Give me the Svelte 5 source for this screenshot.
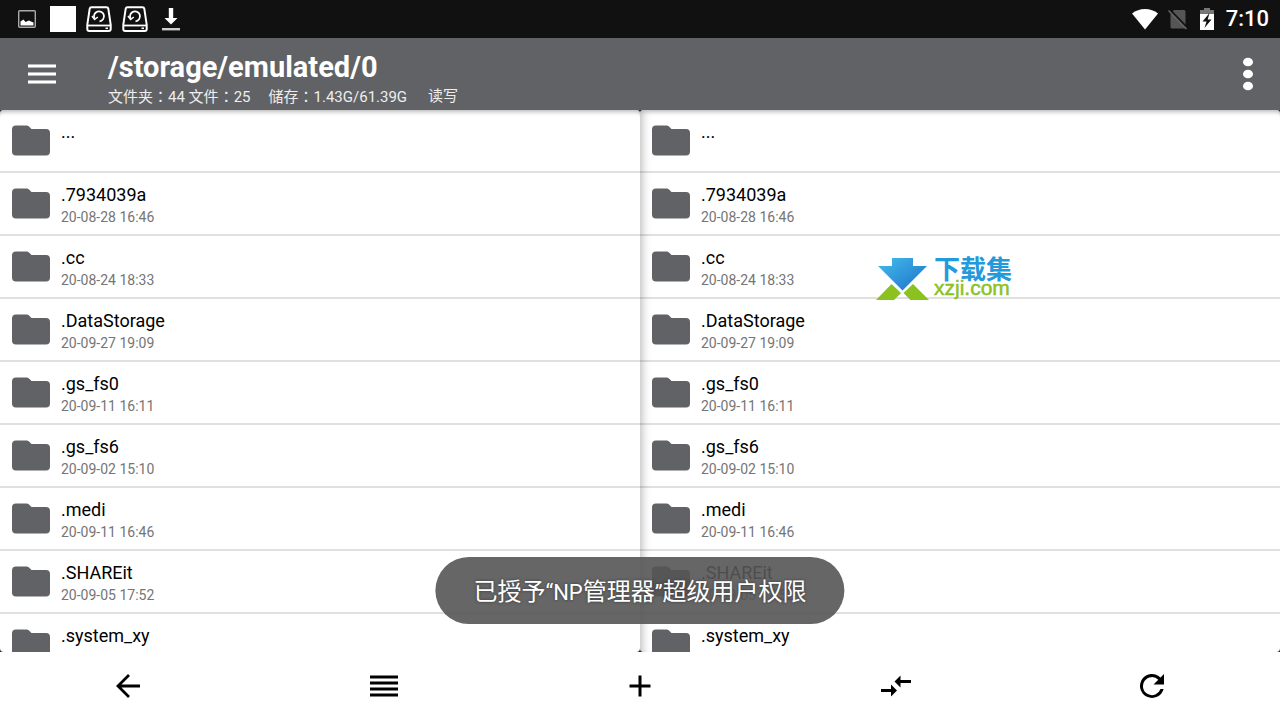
<script>
    let path = '/storage/emulated/0';
    let toast = { before: '已授予', app: '“NP', middle: '管理器', close: '”', after: '超级用户权限' };

    const files = [
        { name: '...', date: '' },
        { name: '.7934039a', date: '20-08-28 16:46' },
        { name: '.cc', date: '20-08-24 18:33' },
        { name: '.DataStorage', date: '20-09-27 19:09' },
        { name: '.gs_fs0', date: '20-09-11 16:11' },
        { name: '.gs_fs6', date: '20-09-02 15:10' },
        { name: '.medi', date: '20-09-11 16:46' },
        { name: '.SHAREit', date: '20-09-05 17:52' },
        { name: '.system_xy', date: '20-09-05 17:52' }
    ];

    const panes = [
        { id: 'left', files: files },
        { id: 'right', files: files }
    ];
</script>

<div class="app">
    <div class="status-bar">
        <div class="notifications">
            <svg class="picture" width="18" height="18" viewBox="0 0 18 18">
                <rect x="0.7" y="0.7" width="16.6" height="16.6" rx="1" fill="none" stroke="#aaa" stroke-width="1.4" />
                <path d="M2.5 15.5v-4l3-2 2 2.500 3.500-1.500 2 1 2.500 1v3z" fill="#fff" />
            </svg>
            <span class="square"></span>
            {#each [1, 2] as disk}
                <svg class="disk" width="26" height="26" viewBox="0 0 26 26" fill="none" stroke="#fff">
                    <path d="M5.5 1.3h15q1.5 0 1.8 1.4l2.4 16v4.2q0 2-2 2H3.3q-2 0-2-2v-4.2l2.4-16Q4 1.3 5.5 1.3z" stroke-width="2" />
                    <path d="M1.5 19.500h23" stroke-width="1.8" />
                    <path d="M8.500 12.500A5 5 0 1 1 13.500 15.300" stroke-width="1.8" />
                    <path d="M6 10l2.600 3.500 3.200-2.500" stroke-width="1.5" />
                    <path d="M19.500 22.300h2.500" stroke-width="1.6" />
                </svg>
            {/each}
            <svg class="download" width="18" height="24" viewBox="0 0 18 24">
                <path d="M6.8 1h4.4v10h4.3L9 17.500 2.500 11h4.300z" fill="#fff" />
                <path d="M0 21h18v2.400H0z" fill="#ccc" />
            </svg>
        </div>
        <div class="system">
            <svg width="26" height="22" viewBox="0 0 26 22">
                <path d="M13 21.500L0 5.500Q5.500 1 13 1t13 4.500z" fill="#fff" />
            </svg>
            <svg width="20" height="22" viewBox="0 0 20 22">
                <path d="M6 2h10q1.500 0 1.500 1.500v17H4q-1.500 0-1.500-1.500V6z" fill="#555" />
                <path d="M1.500 1.500l18 18.500" stroke="#111" stroke-width="2" />
                <path d="M.5 2.500l18 18.500" stroke="#666" stroke-width="1.500" />
            </svg>
            <svg width="14" height="22" viewBox="0 0 14 22">
                <path d="M0 7V2h4V0h6v2h4v5z" fill="#777" />
                <path d="M0 6h14v16H0z" fill="#fff" />
                <path d="M9.500 5L2.500 13.500h4L4.500 20l7-8.500H7.700z" fill="#111" />
            </svg>
            <span class="clock">7:10</span>
        </div>
    </div>

    <header>
        <button class="menu" aria-label="菜单">
            <svg width="28" height="22" viewBox="0 0 28 22">
                <path d="M0 3h28M0 11h28M0 19h28" stroke="#b5b6b8" stroke-width="4" />
                <path d="M0 3h28M0 11h28M0 19h28" stroke="#fff" stroke-width="2" />
            </svg>
        </button>
        <div class="heading">
            <h1>{path}</h1>
            <div class="info">
                <span>文件夹<i>：</i>44 文件<i>：</i>25</span>
                <span>储存<i>：</i>1.43G/61.39G</span>
                <span class="mode">读写</span>
            </div>
        </div>
        <button class="more" aria-label="更多">
            <svg width="10" height="34" viewBox="0 0 10 34" fill="#fff">
                <ellipse cx="5" cy="5" rx="5" ry="4.300" />
                <ellipse cx="5" cy="17" rx="5" ry="4.300" />
                <ellipse cx="5" cy="29" rx="5" ry="4.300" />
            </svg>
        </button>
    </header>

    <main>
        {#each panes as pane}
            <section class="pane {pane.id}">
                <ul>
                    {#each pane.files as file}
                        <li>
                            <svg class="folder" width="38" height="31" viewBox="0 0 38 31">
                                <path d="M4 .5h10.500q1.500 0 2.500 1l2.500 2.500h14.500q4 0 4 4v18.500q0 4-4 4H4q-4 0-4-4V4.500q0-4 4-4z" fill="#616266" />
                            </svg>
                            <div class="file">
                                <div class="name">{file.name}</div>
                                <div class="date">{file.date}</div>
                            </div>
                        </li>
                    {/each}
                </ul>
            </section>
        {/each}

        <div class="watermark">
            <svg width="53" height="42" viewBox="0 0 53 42">
                <defs>
                    <linearGradient id="arrow" x1="0" y1="0" x2="1" y2="1">
                        <stop offset="0" stop-color="#45bdec" />
                        <stop offset="1" stop-color="#1c70c8" />
                    </linearGradient>
                </defs>
                <path d="M16 0h21v8h14L26.500 32.500 2 8h14z" fill="url(#arrow)" />
                <path d="M0 42l15.500-16L25 35l-7 7zM53 42L37 26l-9.500 9 7 7z" fill="#8cc220" />
            </svg>
            <div class="brand">
                <div class="brand-name">下载集</div>
                <div class="brand-url">xzji.com</div>
            </div>
        </div>

        <div class="toast" role="status">
            {toast.before}<span>{toast.app}</span>{toast.middle}<span>{toast.close}</span>{toast.after}
        </div>
    </main>

    <nav>
        <button aria-label="返回">
            <svg width="32" height="32" viewBox="0 0 32 32" fill="none" stroke="#000" stroke-width="2.800">
                <path d="M28 16H6M17 5L6 16l11 11" />
            </svg>
        </button>
        <button aria-label="列表">
            <svg width="32" height="32" viewBox="0 0 32 32" stroke="#000" stroke-width="3">
                <path d="M2 7h28M2 13h28M2 19h28M2 25h28" />
            </svg>
        </button>
        <button aria-label="新建">
            <svg width="32" height="32" viewBox="0 0 32 32" stroke="#000" stroke-width="3">
                <path d="M5.500 16h21M16 5.500v21" />
            </svg>
        </button>
        <button aria-label="同步">
            <svg width="32" height="32" viewBox="0 0 32 32">
                <path d="M14.500 11.500l6-6v4.500h10.500v3H20.500v4.500zM17 20.500l-6 6V22H1v-3h10v-4.500z" />
            </svg>
        </button>
        <button aria-label="刷新">
            <svg width="32" height="32" viewBox="0 0 32 32">
                <path d="M24.500 7.500A12 12 0 1 0 27.600 19h-3.100A9 9 0 1 1 22.300 9.700L17.500 14.500H28V4z" />
            </svg>
        </button>
    </nav>
</div>

<style>
    :global(body) {
        margin: 0;
    }

    .app {
        display: flex;
        flex-direction: column;
        height: 100vh;
        overflow: hidden;
        background: #fff;
        color: #000;
        font-family: Roboto, 'Noto Sans CJK SC', sans-serif;
    }

    svg {
        display: block;
        flex: none;
    }

    button {
        display: flex;
        align-items: center;
        justify-content: center;
        padding: 0;
        border: 0;
        background: none;
        cursor: pointer;
    }

    .status-bar {
        display: flex;
        align-items: center;
        justify-content: space-between;
        flex: none;
        height: 38px;
        padding: 0 11px 0 18px;
        background: #111;
    }

    .notifications,
    .system {
        display: flex;
        align-items: center;
        gap: 10px;
    }

    .picture {
        margin-right: 4px;
    }

    .square {
        width: 26px;
        height: 26px;
        background: #fff;
    }

    .download {
        margin-left: 4px;
    }

    .system {
        gap: 12px;
    }

    .system svg:nth-child(2) {
        margin-left: -2px;
    }

    .clock {
        color: #fff;
        font-size: 22px;
        font-weight: 500;
        line-height: 40px;
    }

    header {
        display: flex;
        align-items: center;
        flex: none;
        height: 72px;
        background: #616266;
        color: #fff;
    }

    .menu {
        width: 84px;
        height: 72px;
    }

    .heading {
        flex: 1;
        padding: 8px 0 0 24px;
    }

    h1 {
        margin: 0;
        font-size: 29px;
        font-weight: 700;
        line-height: 36px;
    }

    .info {
        display: flex;
        gap: 18px;
        height: 22px;
        color: #eee;
        font-size: 15px;
        line-height: 22px;
    }

    .info i {
        font-family: 'Noto Sans CJK TC', sans-serif;
        font-style: normal;
    }

    .mode {
        padding-left: 3px;
    }

    .more {
        width: 65px;
        height: 72px;
    }

    main {
        position: relative;
        display: flex;
        flex: 1;
        min-height: 0;
        background: #333;
    }

    .pane {
        flex: 1;
        overflow: hidden;
        border-radius: 4px;
        background: #fff;
        box-shadow: inset 0 6px 4px -4px #bbb;
    }

    .right {
        box-shadow: inset 0 6px 4px -4px #bbb, inset 12px 0 10px -10px #bbb;
    }

    ul {
        margin: 0;
        padding: 0;
        list-style: none;
    }

    li {
        display: flex;
        box-sizing: border-box;
        height: 63px;
        padding: 15px 12px 0;
        border-bottom: 2px solid rgba(0, 0, 0, 0.12);
    }

    .file {
        padding-left: 11px;
    }

    .name {
        font-size: 18px;
        line-height: 22px;
        margin-top: -4px;
    }

    .date {
        color: #757575;
        font-size: 14px;
        line-height: 22px;
    }

    .watermark {
        position: absolute;
        top: 148px;
        left: 876px;
        display: flex;
        gap: 5px;
    }

    .brand-name {
        color: #239adb;
        font-family: 'Noto Sans CJK SC', sans-serif;
        font-size: 26px;
        font-weight: 700;
        line-height: 20px;
    }

    .brand-url {
        color: #8cc220;
        font-family: 'Liberation Sans', sans-serif;
        font-size: 21px;
        line-height: 20px;
        -webkit-text-stroke: 0.5px #8cc220;
    }

    .toast {
        position: absolute;
        bottom: 28px;
        left: 50%;
        box-sizing: border-box;
        height: 67px;
        padding: 0 38px;
        border-radius: 34px;
        background: rgba(85, 85, 85, 0.9);
        color: #fff;
        font-family: 'Noto Sans CJK SC', sans-serif;
        font-size: 24px;
        line-height: 66px;
        text-shadow: 0 0 3px #333;
        white-space: nowrap;
        transform: translateX(-50%);
    }

    .toast span {
        font-family: Roboto, sans-serif;
        font-size: 22px;
    }

    nav {
        display: flex;
        flex: none;
        height: 68px;
        background: #fff;
    }

    nav button {
        flex: 1;
    }
</style>
